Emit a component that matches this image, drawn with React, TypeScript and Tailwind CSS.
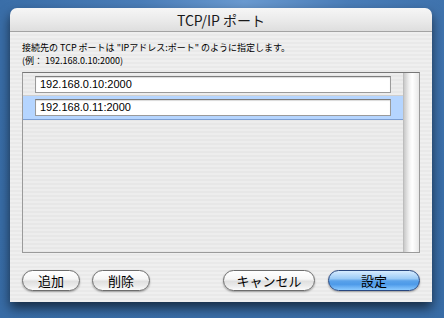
import React from "react";

const jp = { fontFamily: '"Noto Sans CJK JP", "Noto Sans", sans-serif' };
const mono = { fontFamily: '"Liberation Sans", Arial, sans-serif' };

function AquaButton({ label, w, primary }: { label: string; w: string; primary?: boolean }) {
  return (
    <button
      style={jp}
      className={
        "h-[21px] rounded-full border text-[13px] leading-none text-black flex items-center justify-center shadow-[0_1px_2px_rgba(0,0,0,0.35)] " +
        w +
        " " +
        (primary
          ? "border-[#28477f] bg-[linear-gradient(180deg,#d6ecff_0%,#9ccbf6_40%,#5aa2ea_52%,#4d9ae9_70%,#8ccaff_100%)]"
          : "border-[#6d6d6d] bg-[linear-gradient(180deg,#ffffff_0%,#f6f6f6_42%,#e0e0e0_55%,#ececec_80%,#fbfbfb_100%)]")
      }
    >
      {label}
    </button>
  );
}

function Field({ value }: { value: string }) {
  return (
    <div className="h-[17px] flex-1 bg-white border border-[#9a9a9a] border-t-[#7c7c7c] shadow-[inset_0_1px_1px_rgba(0,0,0,0.15)] flex items-center pl-[4px]">
      <span style={mono} className="text-[11px] text-black leading-none">{value}</span>
    </div>
  );
}

export default function App() {
  return (
    <div className="w-[444px] h-[318px] overflow-hidden bg-[radial-gradient(ellipse_at_55%_0%,#6a9ad0_0%,#4a7db8_30%,#3a6ea8_70%,#386ca6_100%)] pt-[8px] px-[10px]">
      <div className="w-[422px] h-[294px] rounded-t-[7px] overflow-hidden shadow-[0_6px_12px_rgba(0,0,0,0.6)] flex flex-col">
        <div className="h-[24px] shrink-0 bg-[linear-gradient(180deg,#f6f6f6_0%,#ebebeb_50%,#dedede_100%)] border-b border-[#a3a3a3] flex items-center justify-center">
          <span style={jp} className="text-[14px] text-[#1a1a1a] leading-none">TCP/IP ポート</span>
        </div>
        <div className="flex-1 flex flex-col px-[12px] pt-[9px] bg-[repeating-linear-gradient(180deg,#efefef_0px,#efefef_2px,#e9e9e9_2px,#e9e9e9_4px)]">
          <div style={jp} className="text-[9px] leading-[13px] text-black">
            <div>接続先の TCP ポートは "IPアドレス:ポート" のように指定します。</div>
            <div>(例： 192.168.0.10:2000)</div>
          </div>
          <div className="mt-[5px] h-[181px] border border-[#9a9a9a] border-t-[#777] flex bg-[repeating-linear-gradient(180deg,#ededed_0px,#ededed_2px,#e7e7e7_2px,#e7e7e7_4px)]">
            <div className="flex-1 flex flex-col">
              <div className="h-[23px] flex items-center px-[12px] border-b border-[#cfcfcf]">
                <Field value="192.168.0.10:2000" />
              </div>
              <div className="h-[24px] flex items-center px-[12px] bg-[#b5d5ff] border-b border-[#7d9fd2]">
                <Field value="192.168.0.11:2000" />
              </div>
            </div>
            <div className="w-[16px] border-l border-[#bdbdbd] bg-[linear-gradient(90deg,#c9c9c9_0%,#f2f2f2_35%,#ffffff_55%,#e8e8e8_100%)]" />
          </div>
          <div className="mt-[17px] flex items-center">
            <AquaButton label="追加" w="w-[58px]" />
            <div className="w-[12px]" />
            <AquaButton label="削除" w="w-[58px]" />
            <div className="flex-1" />
            <AquaButton label="キャンセル" w="w-[92px]" />
            <div className="w-[13px]" />
            <AquaButton label="設定" w="w-[92px]" primary />
          </div>
        </div>
      </div>
    </div>
  );
}
